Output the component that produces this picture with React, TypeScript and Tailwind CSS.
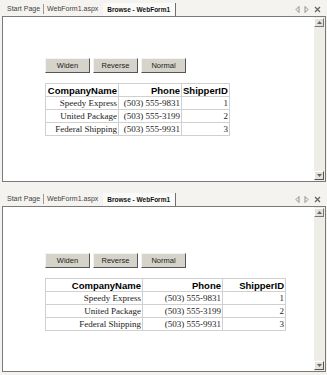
import React from "react";

const shippers = [
  { name: "Speedy Express", phone: "(503) 555-9831", id: 1 },
  { name: "United Package", phone: "(503) 555-3199", id: 2 },
  { name: "Federal Shipping", phone: "(503) 555-9931", id: 3 },
];

function TabStrip() {
  return (
    <div className="h-[16px] flex items-end pl-[4px] pr-[6px] text-[7px] text-[#444] font-['Liberation_Sans',Arial,sans-serif]">
      <div className="h-[13px] flex items-center px-[3px]">Start Page</div>
      <div className="w-px h-[10px] mb-[2px] bg-[#9a9a9a]" />
      <div className="h-[13px] flex items-center px-[3px]">WebForm1.aspx</div>
      <div className="h-[13px] ml-[2px] flex items-center pl-[4px] pr-[5px] bg-[#fafaf8] border-r border-[#6f6f6f] font-bold text-[6.5px] text-[#111]">
        Browse - WebForm1
      </div>
      <div className="flex-1" />
      <div className="flex items-center gap-[4px] h-[13px] text-[#888]">
        <svg width="5" height="7" viewBox="0 0 5 7">
          <path d="M4 0.5 L1 3.5 L4 6.5 Z" fill="none" stroke="#888" strokeWidth="0.9" />
        </svg>
        <svg width="5" height="7" viewBox="0 0 5 7">
          <path d="M1 0.5 L4 3.5 L1 6.5 Z" fill="none" stroke="#888" strokeWidth="0.9" />
        </svg>
        <svg width="7" height="7" viewBox="0 0 7 7" className="ml-[1px]">
          <path d="M1 1 L6 6 M6 1 L1 6" stroke="#666" strokeWidth="1.3" />
        </svg>
      </div>
    </div>
  );
}

function ScrollBar() {
  return (
    <div className="w-[11px] bg-[#eeede6] flex flex-col justify-between py-[1px] pr-[1px]">
      <div className="w-[10px] h-[9px] bg-[#e4e2da] border border-t-[#fff] border-l-[#fff] border-b-[#777] border-r-[#777] flex items-center justify-center">
        <svg width="5" height="3" viewBox="0 0 5 3">
          <path d="M0 3 L2.5 0 L5 3 Z" fill="#666" />
        </svg>
      </div>
      <div className="w-[10px] h-[9px] bg-[#e4e2da] border border-t-[#fff] border-l-[#fff] border-b-[#555] border-r-[#555] flex items-center justify-center">
        <svg width="5" height="3" viewBox="0 0 5 3">
          <path d="M0 0 L2.5 3 L5 0 Z" fill="#666" />
        </svg>
      </div>
    </div>
  );
}

function Btn({ label }: { label: string }) {
  return (
    <button className="w-[45px] h-[15px] bg-[#d6d3cb] border border-t-[#f4f4f4] border-l-[#f4f4f4] border-b-[#555] border-r-[#555] text-[7.5px] text-[#222] font-['Liberation_Sans',Arial,sans-serif] flex items-center justify-center">
      {label}
    </button>
  );
}

function Grid({ widths }: { widths: number[] }) {
  const cell = "border border-[#d0d0d0] text-right px-[1px] h-[13px] leading-[11px] whitespace-nowrap";
  return (
    <table className="border-collapse border-b border-r border-b-[#a8a8a8] border-r-[#a8a8a8] table-fixed">
      <colgroup>
        {widths.map((w, i) => (
          <col key={i} style={{ width: w }} />
        ))}
      </colgroup>
      <thead>
        <tr className="font-['Liberation_Sans',Arial,sans-serif] font-bold text-[9.5px] text-[#000]">
          <th className={cell}>CompanyName</th>
          <th className={cell}>Phone</th>
          <th className={cell}>ShipperID</th>
        </tr>
      </thead>
      <tbody className="font-['Liberation_Serif','Times_New_Roman',serif] text-[9px] text-[#222]">
        {shippers.map((s) => (
          <tr key={s.id}>
            <td className={cell}>{s.name}</td>
            <td className={cell}>{s.phone}</td>
            <td className={cell}>{s.id}</td>
          </tr>
        ))}
      </tbody>
    </table>
  );
}

function Panel({ padTop, widths, h }: { padTop: string; widths: number[]; h: string }) {
  return (
    <div className={`${h} flex flex-col`}>
      <TabStrip />
      <div className="flex-1 flex ml-[2px] mr-[1px] border border-[#7a7a7a] bg-white">
        <div className={`flex-1 pl-[42px] ${padTop}`}>
          <div className="flex gap-[3px]">
            <Btn label="Widen" />
            <Btn label="Reverse" />
            <Btn label="Normal" />
          </div>
          <div className="mt-[10px]">
            <Grid widths={widths} />
          </div>
        </div>
        <ScrollBar />
      </div>
    </div>
  );
}

export default function App() {
  return (
    <div className="w-[327px] h-[375px] bg-[#f4f3ef] flex flex-col overflow-hidden">
      <Panel h="h-[182px]" padTop="pt-[41px]" widths={[73, 63, 47]} />
      <div className="h-[8px]" />
      <Panel h="h-[182px]" padTop="pt-[46px]" widths={[97, 80, 63]} />
    </div>
  );
}
